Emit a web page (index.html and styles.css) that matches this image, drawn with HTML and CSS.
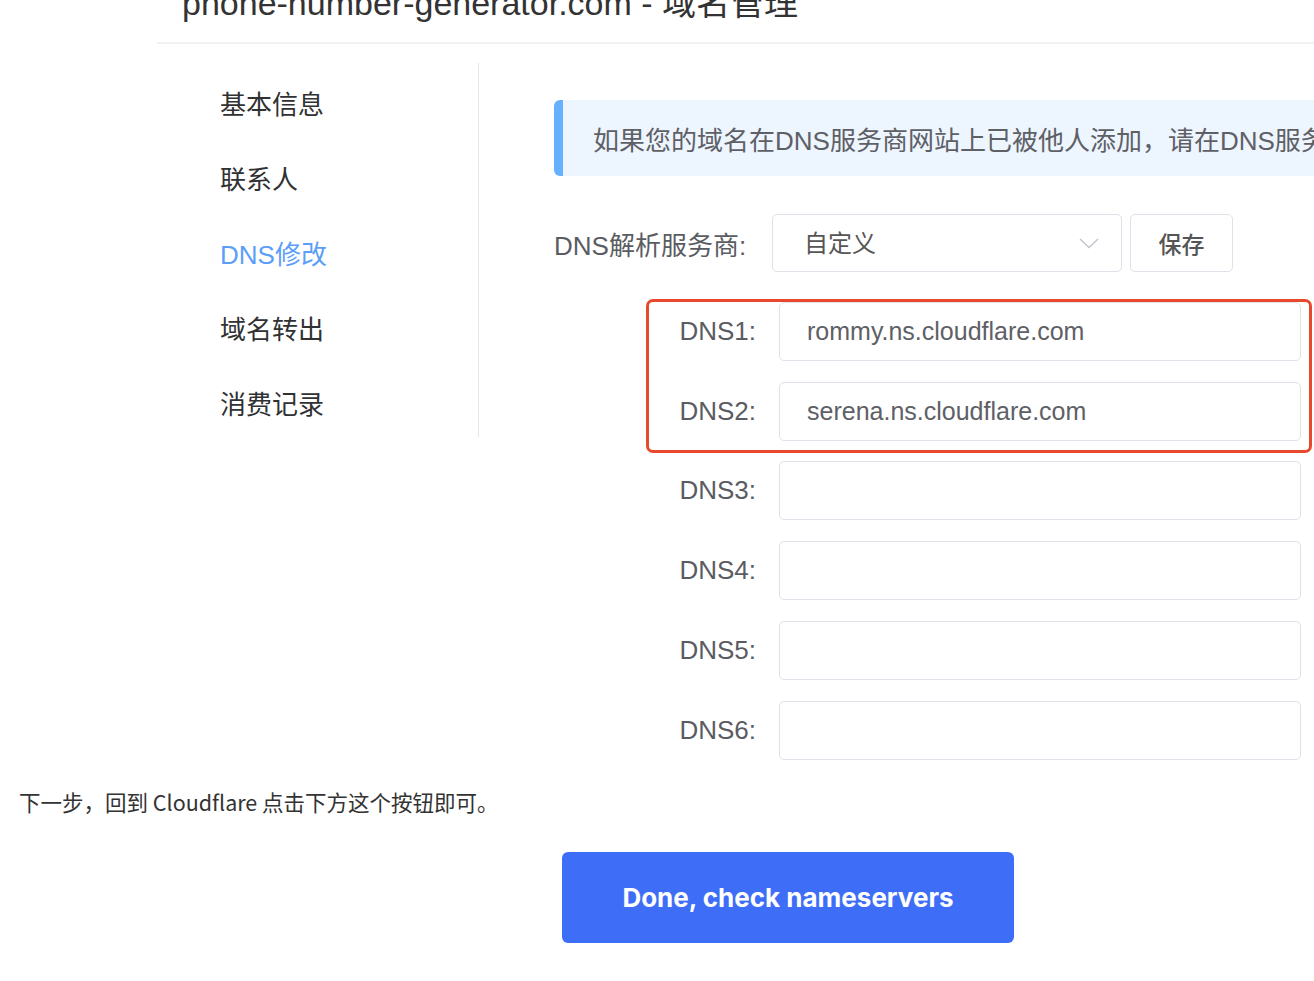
FILE: index.html
```html
<!DOCTYPE html>
<html lang="zh-CN">
<head>
<meta charset="utf-8">
<title>DNS修改</title>
<link rel="stylesheet" href="styles.css">
</head>
<body>
<div class="shot">
  <div class="head">
    <h1 class="title">phone-number-generator.com - 域名管理</h1>
  </div>
  <div class="cols">
    <ul class="side">
      <li class="menu-item">基本信息</li>
      <li class="menu-item">联系人</li>
      <li class="menu-item active">DNS修改</li>
      <li class="menu-item">域名转出</li>
      <li class="menu-item">消费记录</li>
    </ul>
    <div class="main">
      <div class="alert">如果您的域名在DNS服务商网站上已被他人添加，请在DNS服务商网站上删除后再进行修改。</div>
      <div class="provider-row">
        <span class="provider-label">DNS解析服务商:</span>
        <div class="select">
          <span class="select-value">自定义</span>
          <svg class="chevron" width="20" height="11" viewBox="0 0 20 11"><path d="M1 1 L10 9.5 L19 1" fill="none" stroke="#c0c4cc" stroke-width="1.4"/></svg>
        </div>
        <button class="save-btn">保存</button>
      </div>
      <div class="dns">
        <div class="redbox">
          <div class="dns-row"><span class="dns-label">DNS1:</span><div class="dns-input">rommy.ns.cloudflare.com</div></div>
          <div class="dns-row"><span class="dns-label">DNS2:</span><div class="dns-input">serena.ns.cloudflare.com</div></div>
        </div>
        <div class="rest">
          <div class="dns-row"><span class="dns-label">DNS3:</span><div class="dns-input"></div></div>
          <div class="dns-row"><span class="dns-label">DNS4:</span><div class="dns-input"></div></div>
          <div class="dns-row"><span class="dns-label">DNS5:</span><div class="dns-input"></div></div>
          <div class="dns-row"><span class="dns-label">DNS6:</span><div class="dns-input"></div></div>
        </div>
      </div>
    </div>
  </div>
</div>
<p class="caption">下一步，回到 Cloudflare 点击下方这个按钮即可。</p>
<div class="cta-wrap">
  <button class="cta">Done, check nameservers</button>
</div>
</body>
</html>
```

FILE: styles.css
```css
html, body {
  margin: 0;
  padding: 0;
  background: #ffffff;
  overflow-x: hidden;
}

body {
  font-family: "Liberation Sans", "Noto Sans CJK SC", sans-serif;
  color: #333333;
}

.shot {
  margin-left: 157px;
}

.head {
  display: flex;
  align-items: flex-start;
  height: 42px;
  border-bottom: 2px solid #f1f1f1;
  padding-left: 25px;
}

.title {
  margin: -14px 0 0 0;
  font-size: 34px;
  line-height: 34px;
  font-weight: normal;
  color: #333333;
  white-space: nowrap;
}

.cols {
  display: flex;
  margin-top: 19px;
}

.side {
  list-style: none;
  margin: 0;
  padding: 5px 0 0 63px;
  width: 322px;
  height: 374px;
  box-sizing: border-box;
  flex: none;
  border-right: 1px solid #e6e6e6;
}

.menu-item {
  font-size: 26px;
  line-height: 75px;
  height: 75px;
  color: #303133;
  white-space: nowrap;
}

.menu-item.active {
  color: #5b9ef7;
}

.main {
  flex: 1;
  min-width: 0;
  padding: 37px 0 0 75px;
}

.alert {
  box-sizing: border-box;
  width: 1000px;
  height: 76px;
  display: flex;
  align-items: center;
  background: #edf5fe;
  border-left: 9px solid #66b1ff;
  border-radius: 6px;
  padding-left: 30px;
  font-size: 26px;
  color: #5e6066;
  white-space: nowrap;
}

.provider-row {
  display: flex;
  align-items: center;
  margin-top: 38px;
  height: 58px;
}

.provider-label {
  width: 218px;
  flex: none;
  font-size: 26px;
  color: #5a5c62;
  white-space: nowrap;
}

.select {
  box-sizing: border-box;
  width: 350px;
  height: 58px;
  border: 1px solid #dfe2e8;
  border-radius: 5px;
  display: flex;
  align-items: center;
  justify-content: space-between;
  padding: 0 22px 0 31px;
  flex: none;
}

.select-value {
  font-size: 24px;
  margin-top: -4px;
  color: #555555;
}

.chevron {
  display: block;
}

.save-btn {
  box-sizing: border-box;
  width: 103px;
  height: 58px;
  margin-left: 8px;
  border: 1px solid #dfe2e8;
  border-radius: 5px;
  background: #ffffff;
  font-family: "Liberation Sans", "Noto Sans CJK SC", sans-serif;
  font-size: 23px;
  font-weight: 500;
  color: #555555;
  padding: 0;
}

.dns {
  margin: 27px 0 0 92px;
}

.redbox {
  width: fit-content;
  border: 3px solid #e8492c;
  border-radius: 7px;
  padding: 0 8px 9px 0;
  display: flex;
  flex-direction: column;
  gap: 21px;
}

.rest {
  margin-top: 8px;
  padding-left: 3px;
  display: flex;
  flex-direction: column;
  gap: 21px;
}

.dns-row {
  display: flex;
  align-items: center;
}

.dns-label {
  width: 107px;
  flex: none;
  text-align: right;
  font-size: 26px;
  color: #5a5c62;
}

.dns-input {
  box-sizing: border-box;
  width: 522px;
  height: 59px;
  margin-left: 23px;
  border: 1px solid #dfe2e8;
  border-radius: 5px;
  padding-left: 27px;
  display: flex;
  align-items: center;
  font-size: 25px;
  color: #5e6066;
  flex: none;
}

.caption {
  margin: 27px 0 0 0;
  padding-left: 19px;
  font-family: "Noto Sans CJK SC", sans-serif;
  font-size: 21.5px;
  line-height: 30px;
  color: #333333;
}

.cta-wrap {
  margin-top: 35px;
  padding-left: 562px;
}

.cta {
  width: 452px;
  height: 91px;
  border: none;
  border-radius: 6px;
  background: #3e6ef8;
  color: #ffffff;
  font-family: Inter, "Liberation Sans", sans-serif;
  font-size: 26px;
  font-weight: 700;
  padding: 0;
}
```
